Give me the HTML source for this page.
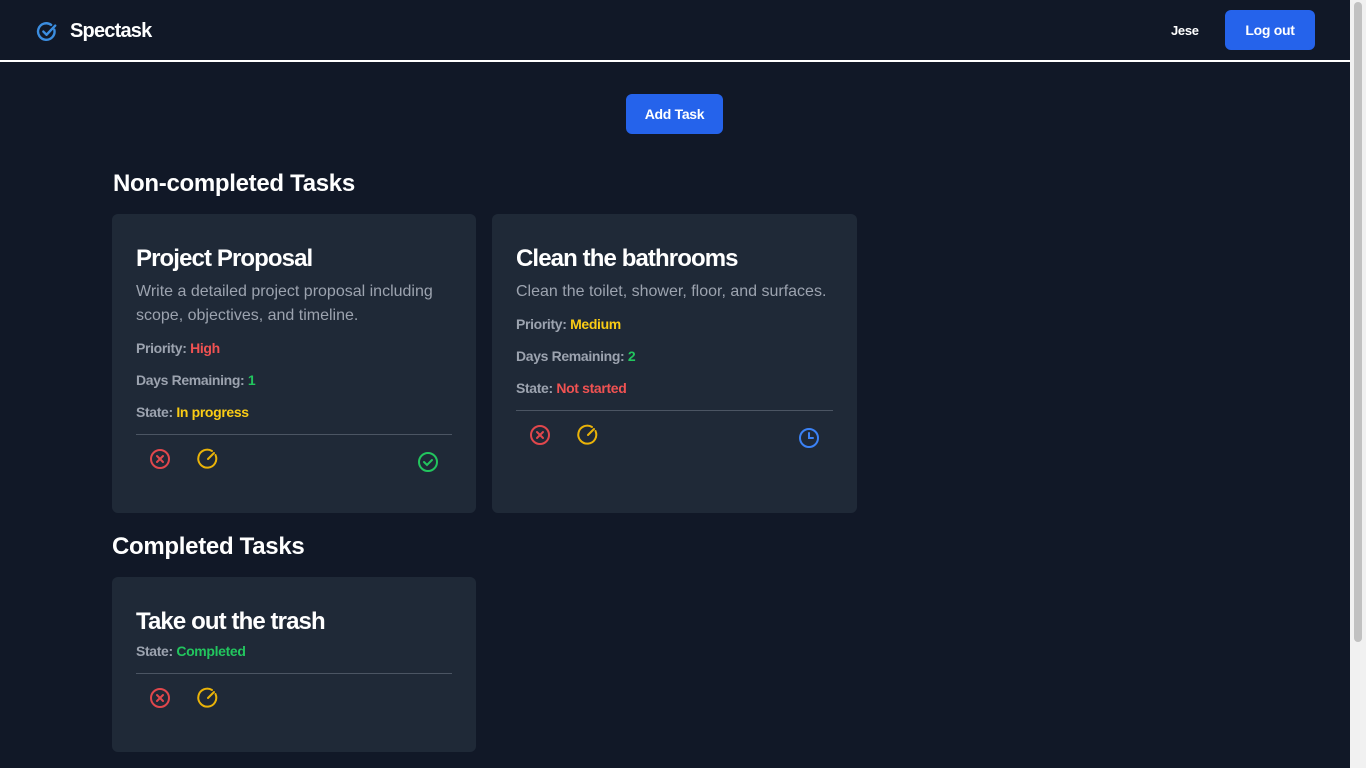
<!DOCTYPE html>
<html><head><style>
*{box-sizing:border-box;margin:0;padding:0}
body{width:1366px;height:768px;overflow:hidden;background:#111827;font-family:"Liberation Sans",sans-serif;color:#fff;position:relative}
.sb{position:absolute;right:0;top:0;width:16px;height:768px;background:#f1f1f1}
.sb div{position:absolute;left:4px;right:4px;top:2px;height:640px;background:#c1c1c1;border-radius:4px}
header{position:absolute;left:0;top:0;width:1350px;height:62px;border-bottom:2px solid #fff;}
.logo{position:absolute;left:36px;top:20px;display:flex;align-items:center;gap:12px;font-size:20px;font-weight:bold;letter-spacing:-0.8px}
.user{position:absolute;left:1171px;top:23px;font-size:13px;font-weight:bold;letter-spacing:-0.3px}
.btn{position:absolute;background:#2563eb;border-radius:6px;font-size:14px;font-weight:bold;display:flex;align-items:center;justify-content:center;letter-spacing:-0.3px}
h2{position:absolute;font-size:24px;font-weight:bold;letter-spacing:-0.3px}
.card{position:absolute;background:#1f2937;border-radius:6px;padding:24px}
.card h3{font-size:24px;font-weight:bold;margin-top:5px;line-height:32px;letter-spacing:-0.9px}
.desc{color:#9ca3af;font-size:16px;line-height:24px;margin-top:5px}
.m{color:#9ca3af;font-size:14px;font-weight:bold;margin-top:14px;line-height:18px;letter-spacing:-0.35px}
.desc+.m{margin-top:11px}
.hr{border-top:1px solid #4b5563;margin-top:13px}
.ic{position:absolute}
.r{color:#f05252}.y{color:#facc15}.g{color:#22c55e}
</style></head><body>
<header>
<div class="logo"><svg width="22" height="22" viewBox="0 0 24 24" fill="none" stroke="#3b8de0" stroke-width="2.6" stroke-linecap="round" stroke-linejoin="round"><path d="M20 9.5A9 9 0 1 1 16.5 4.2"/><path d="M8 11.5l3.5 3.5L21 5"/></svg>Spectask</div>
<div class="user">Jese</div>
<div class="btn" style="left:1225px;top:10px;width:90px;height:40px">Log out</div>
</header>
<div class="btn" style="left:626px;top:94px;width:97px;height:40px">Add Task</div>
<h2 style="left:113px;top:170px">Non-completed Tasks</h2>
<div class="card" style="left:112px;top:214px;width:364px;height:299px">
<h3>Project Proposal</h3>
<div class="desc">Write a detailed project proposal including scope, objectives, and timeline.</div>
<div class="m">Priority: <span class="r">High</span></div>
<div class="m">Days Remaining: <span class="g">1</span></div>
<div class="m">State: <span class="y">In progress</span></div>
<div class="hr"></div>
</div>
<div class="card" style="left:492px;top:214px;width:365px;height:299px">
<h3>Clean the bathrooms</h3>
<div class="desc">Clean the toilet, shower, floor, and surfaces.</div>
<div class="m">Priority: <span class="y">Medium</span></div>
<div class="m">Days Remaining: <span class="g">2</span></div>
<div class="m">State: <span class="r">Not started</span></div>
<div class="hr"></div>
</div>
<h2 style="left:112px;top:533px">Completed Tasks</h2>
<div class="card" style="left:112px;top:577px;width:364px;height:175px">
<h3>Take out the trash</h3>
<div class="m" style="margin-top:4px">State: <span class="g">Completed</span></div>
<div class="hr" style="margin-top:13px"></div>
</div>
<svg width="0" height="0" style="position:absolute"><defs>
<g id="x"><circle cx="12" cy="12" r="9"/><path d="M9 9l6 6M15 9l-6 6"/></g>
<g id="e"><path d="M19.5 8A9 9 0 1 1 16 4"/><path d="M12 12l6-6"/></g>
<g id="c"><circle cx="12" cy="12" r="9"/><path d="M8 12l3 3 5-5"/></g>
<g id="t"><circle cx="12" cy="12" r="9"/><path d="M12 7v5h4"/></g>
</defs></svg>
<svg class="ic" style="left:148px;top:447px" width="24" height="24" viewBox="0 0 24 24" fill="none" stroke="#e0474c" stroke-width="2" stroke-linecap="round"><use href="#x"/></svg>
<svg class="ic" style="left:196px;top:447px" width="24" height="24" viewBox="0 0 24 24" fill="none" stroke="#eab308" stroke-width="2" stroke-linecap="round"><use href="#e"/></svg>
<svg class="ic" style="left:416px;top:450px" width="24" height="24" viewBox="0 0 24 24" fill="none" stroke="#22c55e" stroke-width="2" stroke-linecap="round"><use href="#c"/></svg>
<svg class="ic" style="left:528px;top:423px" width="24" height="24" viewBox="0 0 24 24" fill="none" stroke="#e0474c" stroke-width="2" stroke-linecap="round"><use href="#x"/></svg>
<svg class="ic" style="left:576px;top:423px" width="24" height="24" viewBox="0 0 24 24" fill="none" stroke="#eab308" stroke-width="2" stroke-linecap="round"><use href="#e"/></svg>
<svg class="ic" style="left:797px;top:426px" width="24" height="24" viewBox="0 0 24 24" fill="none" stroke="#3b82f6" stroke-width="2" stroke-linecap="round"><use href="#t"/></svg>
<svg class="ic" style="left:148px;top:686px" width="24" height="24" viewBox="0 0 24 24" fill="none" stroke="#e0474c" stroke-width="2" stroke-linecap="round"><use href="#x"/></svg>
<svg class="ic" style="left:196px;top:686px" width="24" height="24" viewBox="0 0 24 24" fill="none" stroke="#eab308" stroke-width="2" stroke-linecap="round"><use href="#e"/></svg>
<div class="sb"><div></div></div>
</body></html>
